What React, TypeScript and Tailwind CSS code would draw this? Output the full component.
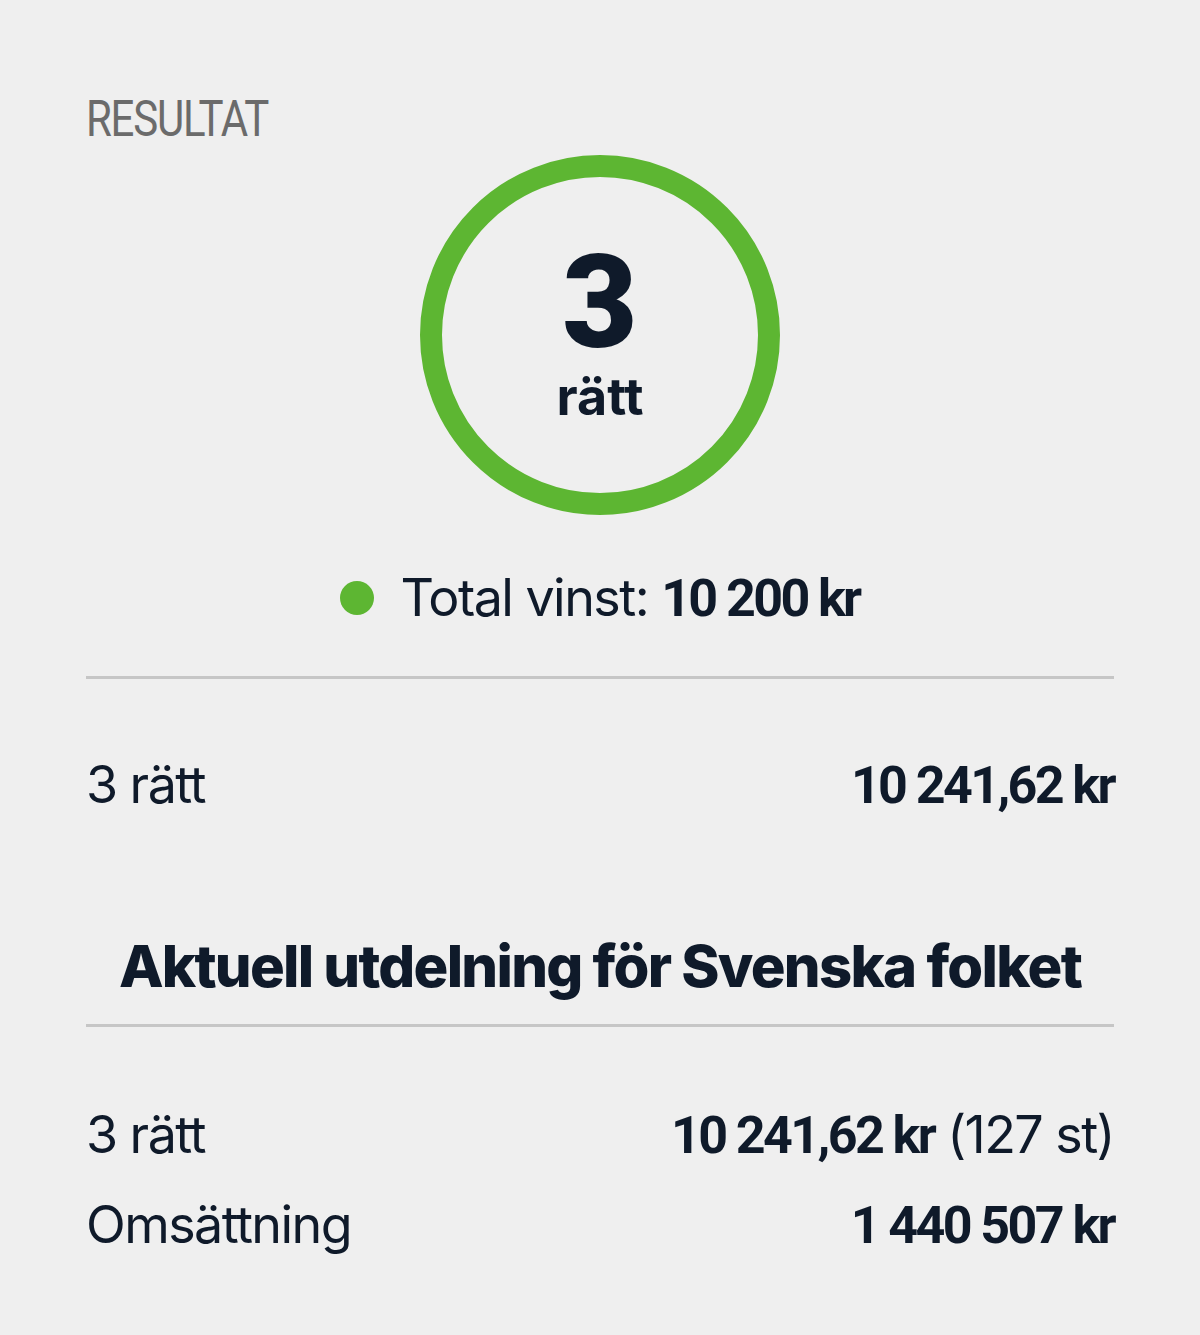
import React from "react";

const sans = "font-['Inter','Noto_Sans',sans-serif]";
const num = "font-['Roboto','Liberation_Sans',sans-serif]";

function Row({ label, value, extra, className }: { label: string; value: string; extra?: string; className?: string }) {
  return (
    <div className={`flex items-baseline justify-between text-[52px] leading-none text-[#0f1a2a] ${className ?? ""}`}>
      <span className={`${sans} tracking-[-0.03em]`}>{label}</span>
      <span>
        <span className={`${num} font-bold tracking-[-0.05em]`}>{value}</span>
        {extra && <span className={`${sans} tracking-[-0.03em]`}> {extra}</span>}
      </span>
    </div>
  );
}

export default function App() {
  return (
    <div className="w-[1200px] h-[1335px] bg-[#efefef] px-[86px] pt-[94px] overflow-hidden">
      <div className="font-['Roboto',sans-serif] text-[50px] leading-none text-[#6b6b6b] tracking-[-0.03em] origin-left scale-x-[0.84]">
        RESULTAT
      </div>

      <div className="mt-[11px] mx-auto w-[360px] h-[360px] rounded-full border-[22px] border-[#5db632] flex flex-col items-center justify-center pb-[9px] text-[#0f1a2a]">
        <div className={`${num} text-[130px] font-black leading-none`}>3</div>
        <div className={`${sans} text-[52px] font-bold leading-none mt-[3px]`}>rätt</div>
      </div>

      <div className="mt-[55px] flex items-center justify-center gap-[26px] text-[52px] leading-none text-[#0f1a2a]">
        <span className="w-[34px] h-[34px] rounded-full bg-[#5db632]" />
        <span>
          <span className={`${sans} tracking-[-0.03em]`}>Total vinst: </span>
          <span className={`${num} font-bold tracking-[-0.05em]`}>10 200 kr</span>
        </span>
      </div>

      <div className="mt-[51px] h-[3px] bg-[#c6c6c6]" />

      <Row label="3 rätt" value="10 241,62 kr" className="mt-[78px]" />

      <div className={`${sans} mt-[125px] text-center text-[58px] font-extrabold leading-none tracking-[-0.03em] text-[#0f1a2a]`}>
        Aktuell utdelning för Svenska folket
      </div>

      <div className="mt-[29px] h-[3px] bg-[#c6c6c6]" />

      <Row label="3 rätt" value="10 241,62 kr" extra="(127 st)" className="mt-[80px]" />
      <Row label="Omsättning" value="1 440 507 kr" className="mt-[35px]" />
    </div>
  );
}
